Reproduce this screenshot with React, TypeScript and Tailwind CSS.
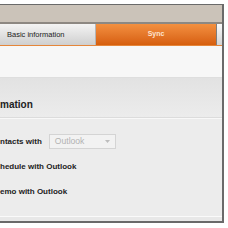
const font = { fontFamily: '"Liberation Sans", Arial, sans-serif' };

function Row({ label, children }: { label: string; children?: React.ReactNode }) {
    return (
        <div className="flex h-[25px] items-center gap-[7px]">
            <span className="text-[8px] font-bold whitespace-nowrap text-[#222]">{label}</span>
            {children}
        </div>
    );
}

export default function App() {
    return (
        <div className="flex h-[228px] w-[228px] flex-col bg-white pt-[4px] pr-[4px] pb-[5px]" style={font}>
            <div className="flex flex-1 flex-col overflow-hidden border-t border-r-2 border-b-2 border-[#6a6a6a] bg-[#ececec]">
                <div className="h-[17px] bg-[#cbc3b9]" />
                <div className="h-[2px] bg-[#8d8882]" />

                {/* tabs */}
                <div className="flex h-[21px] bg-[#d8d8d8]">
                    <div className="flex w-[96px] items-center border-r border-[#b5b5b5] bg-gradient-to-b from-[#f4f4f4] to-[#cfcfcf] pl-[7px]">
                        <span className="text-[7.5px] text-[#222]">Basic information</span>
                    </div>
                    <div className="flex w-[120px] items-center justify-center bg-gradient-to-b from-[#f3903f] to-[#d65e0c]">
                        <span className="text-[7px] font-bold text-[#fde3cf]">Sync</span>
                    </div>
                    <div className="w-px bg-[#7e7e7e]" />
                    <div className="flex-1 bg-gradient-to-b from-[#fafafa] to-[#d4d4d4]" />
                </div>
                <div className="h-px bg-[#e5863a]" />

                <div className="h-[31px] bg-[#f7f7f7]" />
                <div className="h-px bg-[#dedede]" />

                {/* section */}
                <div className="flex h-[39px] items-end bg-gradient-to-b from-[#e2e2e2] to-[#ececec] pb-[5px]">
                    <span className="text-[10px] font-bold text-[#222]">mation</span>
                </div>
                <div className="h-px bg-[#dcdcdc]" />
                <div className="h-px bg-[#f8f8f8]" />

                <div className="flex flex-col pt-[10px]">
                    <Row label="ntacts with">
                        <div className="flex h-[15px] w-[67px] items-center justify-between border border-[#d4d4d4] bg-[#f2f2f2] pr-[5px] pl-[5px]">
                            <span className="text-[8.6px] text-[#b3b3b3]">Outlook</span>
                            <svg width="5" height="3" viewBox="0 0 5 3">
                                <path d="M0 0h5L2.5 3z" fill="#bdbdbd" />
                            </svg>
                        </div>
                    </Row>
                    <Row label="hedule with Outlook" />
                    <Row label="emo with Outlook" />
                </div>

                <div className="flex-1" />
                <div className="h-px bg-[#fafafa]" />
                <div className="h-[4px] bg-[#e8e8e8]" />
            </div>
        </div>
    );
}
